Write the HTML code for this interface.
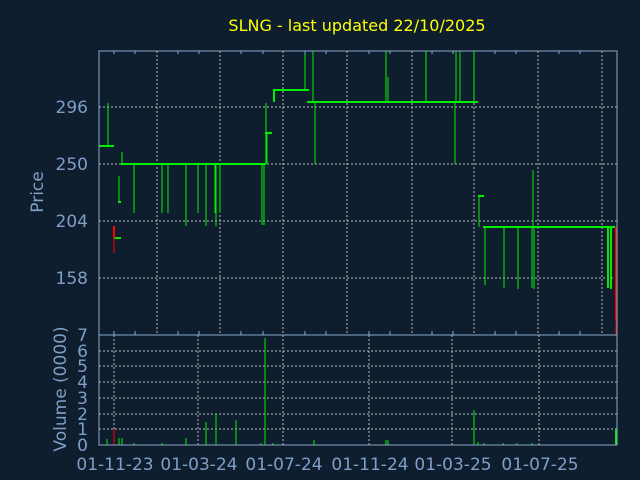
<!DOCTYPE html>
<html><head><meta charset="utf-8"><style>
html,body{margin:0;padding:0;background:#0f1e2f;}
svg{display:block}
text{font-family:"DejaVu Sans","Liberation Sans",sans-serif;}
line,rect{shape-rendering:crispEdges}
</style></head><body>
<svg width="640" height="480" viewBox="0 0 640 480" xmlns="http://www.w3.org/2000/svg">
<rect width="640" height="480" fill="#0f1e2f"/>
<text x="357" y="31" fill="#ffff00" font-size="16" text-anchor="middle">SLNG - last updated 22/10/2025</text>
<g stroke="#bbbbbb" stroke-width="1" stroke-dasharray="2,2">
<line x1="99" y1="107" x2="617" y2="107"/>
<line x1="99" y1="164" x2="617" y2="164"/>
<line x1="99" y1="221" x2="617" y2="221"/>
<line x1="99" y1="278" x2="617" y2="278"/>
<line x1="157" y1="51" x2="157" y2="335"/>
<line x1="220" y1="51" x2="220" y2="335"/>
<line x1="283" y1="51" x2="283" y2="335"/>
<line x1="347" y1="51" x2="347" y2="335"/>
<line x1="412" y1="51" x2="412" y2="335"/>
<line x1="474" y1="51" x2="474" y2="335"/>
<line x1="538" y1="51" x2="538" y2="335"/>
<line x1="602" y1="51" x2="602" y2="335"/>
<line x1="99" y1="351" x2="617" y2="351"/>
<line x1="99" y1="366" x2="617" y2="366"/>
<line x1="99" y1="382" x2="617" y2="382"/>
<line x1="99" y1="398" x2="617" y2="398"/>
<line x1="99" y1="414" x2="617" y2="414"/>
<line x1="99" y1="429" x2="617" y2="429"/>
<line x1="114" y1="335" x2="114" y2="445"/>
<line x1="198" y1="335" x2="198" y2="445"/>
<line x1="283" y1="335" x2="283" y2="445"/>
<line x1="369" y1="335" x2="369" y2="445"/>
<line x1="452" y1="335" x2="452" y2="445"/>
<line x1="539" y1="335" x2="539" y2="445"/>
</g>
<g stroke="#00ee00" stroke-width="1" fill="none">
<line x1="108" y1="103" x2="108" y2="146"/>
<line x1="122" y1="152" x2="122" y2="164"/>
<line x1="119" y1="176" x2="119" y2="202"/>
<line x1="134" y1="164" x2="134" y2="213"/>
<line x1="162" y1="164" x2="162" y2="213"/>
<line x1="168" y1="164" x2="168" y2="213"/>
<line x1="186" y1="164" x2="186" y2="226"/>
<line x1="198" y1="164" x2="198" y2="213"/>
<line x1="206" y1="164" x2="206" y2="226"/>
<line x1="215" y1="164" x2="215" y2="213"/>
<line x1="216" y1="164" x2="216" y2="226"/>
<line x1="220" y1="164" x2="220" y2="213"/>
<line x1="262" y1="164" x2="262" y2="225"/>
<line x1="264" y1="164" x2="264" y2="225"/>
<line x1="266" y1="103" x2="266" y2="164"/>
<line x1="267" y1="133" x2="267" y2="164"/>
<line x1="305" y1="51" x2="305" y2="90"/>
<line x1="313" y1="51" x2="313" y2="102"/>
<line x1="315" y1="102" x2="315" y2="164"/>
<line x1="386" y1="51" x2="386" y2="102"/>
<line x1="388" y1="77" x2="388" y2="102"/>
<line x1="426" y1="51" x2="426" y2="102"/>
<line x1="455" y1="102" x2="455" y2="164"/>
<line x1="456" y1="51" x2="456" y2="102"/>
<line x1="460" y1="51" x2="460" y2="102"/>
<line x1="474" y1="51" x2="474" y2="102"/>
<line x1="479" y1="196" x2="479" y2="227"/>
<line x1="485" y1="227" x2="485" y2="285"/>
<line x1="504" y1="227" x2="504" y2="288"/>
<line x1="518" y1="227" x2="518" y2="289"/>
<line x1="532" y1="227" x2="532" y2="288"/>
<line x1="533" y1="170" x2="533" y2="227"/>
<line x1="534" y1="227" x2="534" y2="289"/>
</g>
<g stroke="#00ee00" stroke-width="2" fill="none">
<line x1="99" y1="146" x2="114" y2="146"/>
<line x1="118" y1="202" x2="121" y2="202"/>
<line x1="114" y1="238" x2="121" y2="238"/>
<line x1="121" y1="164" x2="266" y2="164"/>
<line x1="265" y1="133" x2="272" y2="133"/>
<line x1="274" y1="89" x2="274" y2="102"/>
<line x1="273" y1="90" x2="309" y2="90"/>
<line x1="307" y1="102" x2="478" y2="102"/>
<line x1="478" y1="196" x2="484" y2="196"/>
<line x1="483" y1="227" x2="615" y2="227"/>
<line x1="608" y1="227" x2="608" y2="288"/>
<line x1="611" y1="227" x2="611" y2="289"/>
</g>
<g stroke="#ff0000" fill="none">
<line x1="114" y1="226" x2="114" y2="238" stroke-width="2"/>
<line x1="114" y1="238" x2="114" y2="253" stroke-width="1"/>
<line x1="616" y1="227" x2="616" y2="320" stroke-width="2"/>
<line x1="616" y1="320" x2="616" y2="335" stroke-width="1"/>
</g>
<g stroke="#00ee00" stroke-width="1">
<line x1="107" y1="445" x2="107" y2="439"/>
<line x1="119" y1="445" x2="119" y2="438"/>
<line x1="122" y1="445" x2="122" y2="438"/>
<line x1="134" y1="445" x2="134" y2="443"/>
<line x1="162" y1="445" x2="162" y2="443"/>
<line x1="186" y1="445" x2="186" y2="438"/>
<line x1="206" y1="445" x2="206" y2="422"/>
<line x1="216" y1="445" x2="216" y2="414"/>
<line x1="236" y1="445" x2="236" y2="420"/>
<line x1="261" y1="445" x2="261" y2="443"/>
<line x1="265" y1="445" x2="265" y2="338"/>
<line x1="273" y1="445" x2="273" y2="443"/>
<line x1="314" y1="445" x2="314" y2="440"/>
<line x1="386" y1="445" x2="386" y2="440"/>
<line x1="388" y1="445" x2="388" y2="440"/>
<line x1="474" y1="445" x2="474" y2="410"/>
<line x1="478" y1="445" x2="478" y2="442"/>
<line x1="484" y1="445" x2="484" y2="443"/>
<line x1="503" y1="445" x2="503" y2="443"/>
<line x1="517" y1="445" x2="517" y2="443"/>
<line x1="532" y1="445" x2="532" y2="443"/>
</g>
<line x1="114" y1="445" x2="114" y2="429" stroke="#ff0000"/>
<line x1="616" y1="445" x2="616" y2="429" stroke="#00ee00" stroke-width="2"/>
<g stroke="#8aa8cc" stroke-width="1" fill="none">
<rect x="99" y="51" width="518" height="284"/>
<rect x="99" y="335" width="518" height="110"/>
</g>
<g stroke="#8aa8cc" stroke-width="1">
<line x1="114" y1="51" x2="114" y2="54"/><line x1="135" y1="51" x2="135" y2="54"/>
<line x1="178" y1="51" x2="178" y2="54"/><line x1="199" y1="51" x2="199" y2="54"/>
<line x1="241" y1="51" x2="241" y2="54"/><line x1="263" y1="51" x2="263" y2="54"/>
<line x1="305" y1="51" x2="305" y2="54"/><line x1="326" y1="51" x2="326" y2="54"/>
<line x1="369" y1="51" x2="369" y2="54"/><line x1="390" y1="51" x2="390" y2="54"/>
<line x1="432" y1="51" x2="432" y2="54"/><line x1="453" y1="51" x2="453" y2="54"/>
<line x1="495" y1="51" x2="495" y2="54"/><line x1="516" y1="51" x2="516" y2="54"/>
<line x1="559" y1="51" x2="559" y2="54"/><line x1="580" y1="51" x2="580" y2="54"/>
<line x1="114" y1="335" x2="114" y2="331"/><line x1="135" y1="335" x2="135" y2="331"/>
<line x1="178" y1="335" x2="178" y2="331"/><line x1="199" y1="335" x2="199" y2="331"/>
<line x1="241" y1="335" x2="241" y2="331"/><line x1="263" y1="335" x2="263" y2="331"/>
<line x1="305" y1="335" x2="305" y2="331"/><line x1="326" y1="335" x2="326" y2="331"/>
<line x1="369" y1="335" x2="369" y2="331"/><line x1="390" y1="335" x2="390" y2="331"/>
<line x1="432" y1="335" x2="432" y2="331"/><line x1="453" y1="335" x2="453" y2="331"/>
<line x1="495" y1="335" x2="495" y2="331"/><line x1="516" y1="335" x2="516" y2="331"/>
<line x1="559" y1="335" x2="559" y2="331"/><line x1="580" y1="335" x2="580" y2="331"/>
</g>
<g fill="#7f9fc7" font-size="17" text-anchor="end">
<text x="88" y="113">296</text>
<text x="88" y="170">250</text>
<text x="88" y="227">204</text>
<text x="88" y="284">158</text>
<text x="88" y="341">7</text>
<text x="88" y="357">6</text>
<text x="88" y="372">5</text>
<text x="88" y="388">4</text>
<text x="88" y="404">3</text>
<text x="88" y="420">2</text>
<text x="88" y="435">1</text>
<text x="88" y="451">0</text>
</g>
<g fill="#7f9fc7" font-size="17" text-anchor="middle">
<text x="115" y="470">01-11-23</text>
<text x="199" y="470">01-03-24</text>
<text x="284" y="470">01-07-24</text>
<text x="370" y="470">01-11-24</text>
<text x="453" y="470">01-03-25</text>
<text x="540" y="470">01-07-25</text>
<text transform="translate(43,192) rotate(-90)">Price</text>
<text transform="translate(66,389) rotate(-90)">Volume (0000)</text>
</g>
</svg>
</body></html>
